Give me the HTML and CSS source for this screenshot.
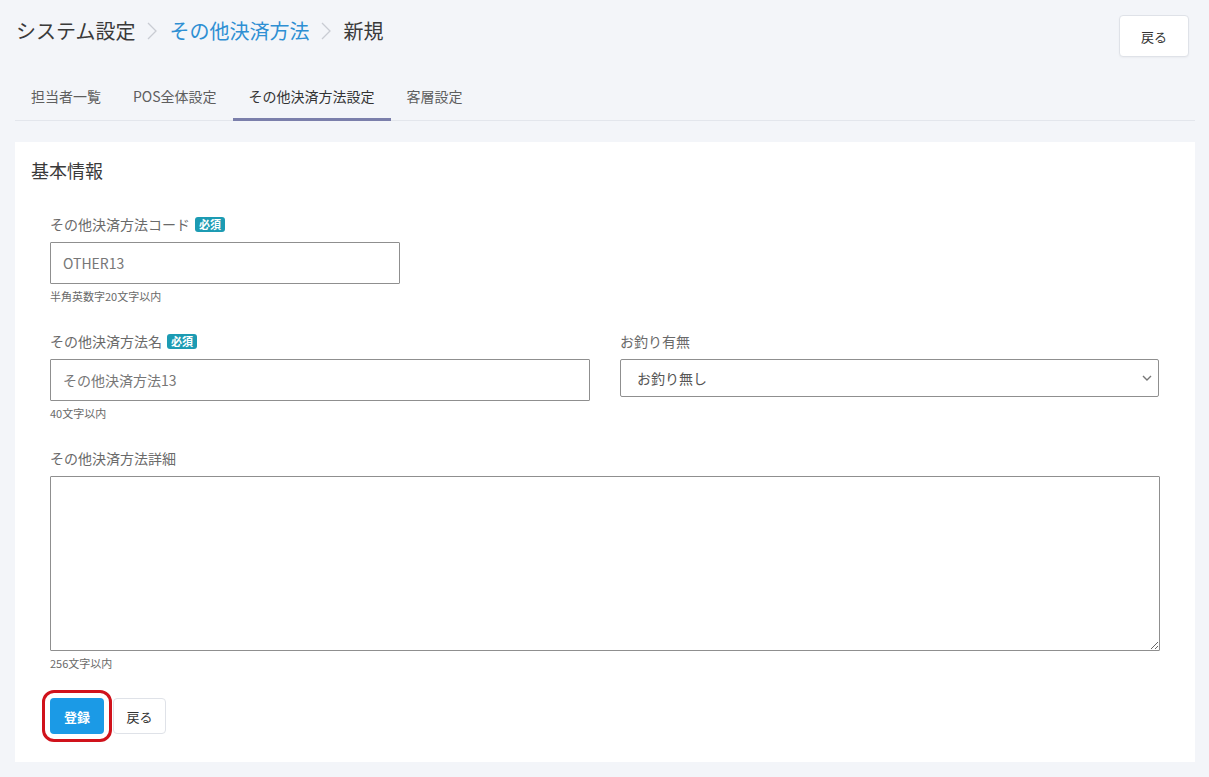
FILE: index.html
```html
<!DOCTYPE html>
<html lang="ja">
<head>
<meta charset="utf-8">
<title>その他決済方法 新規</title>
<link rel="stylesheet" href="styles.css">
</head>
<body>
<div class="page">
  <header class="header">
    <nav class="crumbs">
      <span class="crumb">システム設定</span>
      <svg class="sep" width="12" height="20" viewBox="0 0 12 20"><path d="M2 2 L10 10 L2 18" fill="none" stroke="#c9ccd3" stroke-width="1.3"/></svg>
      <a class="crumb link">その他決済方法</a>
      <svg class="sep" width="12" height="20" viewBox="0 0 12 20"><path d="M2 2 L10 10 L2 18" fill="none" stroke="#c9ccd3" stroke-width="1.3"/></svg>
      <span class="crumb">新規</span>
    </nav>
    <button class="btn btn-top">戻る</button>
  </header>

  <ul class="tabs">
    <li class="tab">担当者一覧</li>
    <li class="tab">POS全体設定</li>
    <li class="tab active">その他決済方法設定</li>
    <li class="tab">客層設定</li>
  </ul>

  <section class="card">
    <h2 class="card-title">基本情報</h2>
    <div class="form">
      <div class="group narrow">
        <label class="label">その他決済方法コード<span class="badge">必須</span></label>
        <input class="input" type="text" value="OTHER13">
        <p class="help">半角英数字20文字以内</p>
      </div>

      <div class="row">
        <div class="group">
          <label class="label">その他決済方法名<span class="badge">必須</span></label>
          <input class="input" type="text" value="その他決済方法13">
          <p class="help">40文字以内</p>
        </div>
        <div class="group">
          <label class="label">お釣り有無</label>
          <select class="select">
            <option>お釣り無し</option>
            <option>お釣り有り</option>
          </select>
        </div>
      </div>

      <div class="group last">
        <label class="label">その他決済方法詳細</label>
        <textarea class="textarea"></textarea>
        <p class="help">256文字以内</p>
      </div>

      <div class="actions">
        <button class="btn btn-primary">登録</button>
        <button class="btn btn-back">戻る</button>
      </div>
    </div>
  </section>
</div>
</body>
</html>
```

FILE: styles.css
```css
* { box-sizing: border-box; }
html, body { margin: 0; padding: 0; }
body {
  background: #f3f5f9;
  font-family: "Noto Sans CJK JP", "Noto Sans", sans-serif;
  color: #333;
  width: 1209px;
  height: 777px;
  overflow: hidden;
}
.page { padding: 0 14px 0 15px; }

.header {
  display: flex;
  justify-content: space-between;
  align-items: flex-start;
  padding-top: 15px;
  height: 72px;
}
.crumbs {
  display: flex;
  align-items: center;
  gap: 11px;
  padding-left: 1px;
  margin-top: 2px;
  font-size: 20px;
  line-height: 28px;
}
.crumb { color: #3a3a3a; }
.crumb.link { color: #2e8fd3; text-decoration: none; }
.sep { display: block; }

.btn {
  font-family: inherit;
  cursor: pointer;
  border-radius: 4px;
}
.btn-top {
  width: 70px;
  height: 42px;
  margin-right: 6px;
  background: #fff;
  border: 1px solid #dfe2e8;
  font-size: 13px;
  color: #333;
  box-shadow: 0 1px 2px rgba(0,0,0,0.04);
}

.tabs {
  list-style: none;
  margin: 0;
  padding: 0;
  display: flex;
  border-bottom: 1px solid #e3e6ec;
  height: 49px;
}
.tab {
  padding: 0 16px;
  font-size: 14px;
  line-height: 48px;
  color: #5e5e5e;
  border-bottom: 3px solid transparent;
  height: 49px;
  margin-bottom: -1px;
}
.tab.active {
  color: #333;
  border-bottom-color: #7b7fab;
}

.card {
  margin-top: 21px;
  background: #fff;
  height: 620px;
  padding: 16px 35px 0 16px;
}
.card-title {
  margin: 0;
  font-size: 18px;
  font-weight: 400;
  line-height: 24px;
  color: #3a3a3a;
}
.form {
  padding: 32px 0 0 19px;
}
.group { margin-bottom: 27px; }
.group.narrow { width: 350px; }
.row {
  display: grid;
  grid-template-columns: 540px 539px;
  gap: 30px;
}
.label {
  display: flex;
  align-items: center;
  font-size: 14px;
  line-height: 20px;
  color: #6a6a6a;
  margin-bottom: 8px;
}
.badge {
  display: inline-block;
  margin-left: 5px;
  padding: 0 4px;
  height: 15px;
  line-height: 15px;
  font-size: 11px;
  font-weight: 700;
  color: #fff;
  background: #1c9bb3;
  border-radius: 3px;
}
.input {
  display: block;
  width: 100%;
  height: 42px;
  border: 1px solid #8f8f8f;
  border-radius: 1px;
  padding: 0 12px;
  font-family: inherit;
  font-size: 14px;
  color: #777;
  background: #fff;
}
.select {
  display: block;
  width: 100%;
  height: 38px;
  border: 1px solid #8f8f8f;
  border-radius: 2px;
  padding: 0 16px;
  font-family: inherit;
  font-size: 14px;
  color: #555;
  background: #fff url("data:image/svg+xml,%3Csvg xmlns='http://www.w3.org/2000/svg' width='10' height='6' viewBox='0 0 10 6'%3E%3Cpath d='M1 1 L5 5 L9 1' fill='none' stroke='%23777' stroke-width='1.4'/%3E%3C/svg%3E") no-repeat right 6px center;
  -webkit-appearance: none;
  appearance: none;
}
.textarea {
  display: block;
  width: 100%;
  height: 175px;
  border: 1px solid #8f8f8f;
  border-radius: 1px;
  font-family: inherit;
  font-size: 14px;
  resize: vertical;
}
.help {
  margin: 4px 0 0;
  font-size: 11px;
  line-height: 16px;
  color: #6a6a6a;
}
.group.last { margin-bottom: 27px; }

.actions {
  display: flex;
  align-items: center;
  gap: 9px;
}
.btn-primary {
  width: 54px;
  height: 36px;
  background: #1b9ae6;
  border: none;
  color: #fff;
  font-size: 13px;
  font-weight: 700;
  outline: 3px solid #d0121b;
  outline-offset: 5px;
  border-radius: 4px;
}
.btn-back {
  width: 53px;
  height: 36px;
  background: #fff;
  border: 1px solid #dfe2e8;
  color: #333;
  font-size: 13px;
}
```
